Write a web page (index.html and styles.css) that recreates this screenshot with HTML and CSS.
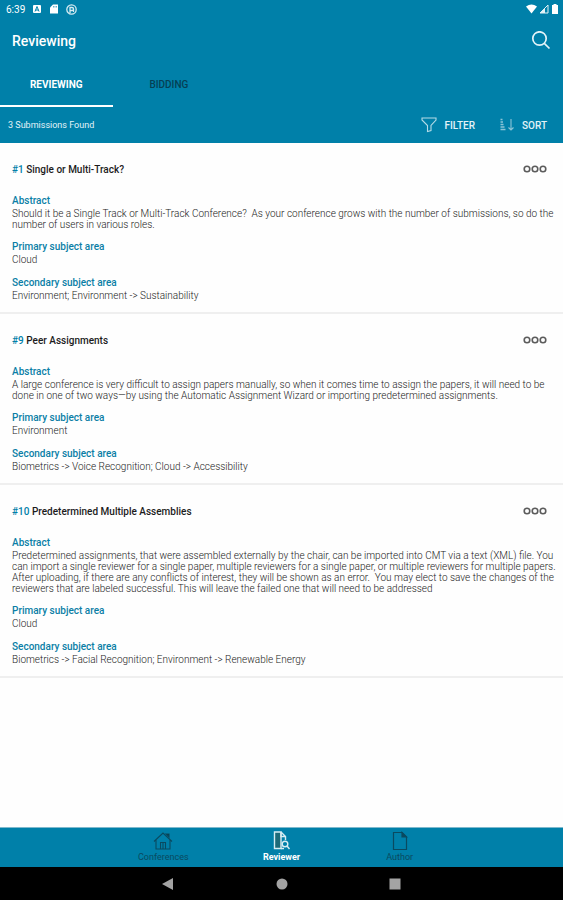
FILE: index.html
```html
<!DOCTYPE html>
<html lang="en">
<head>
    <meta charset="UTF-8">
    <meta name="viewport" content="width=device-width, initial-scale=1.0">
    <title>Reviewing</title>
    <link rel="stylesheet" href="styles.css">
</head>
<body>
    <header class="header">
        <div class="status-bar">
            <div class="status-left">
                <span>6:39</span>
                <svg width="10" height="10" viewBox="0 0 10 10"><rect x="1" y="1" width="8" height="8" rx="1" fill="#fff"/><path d="M3 7.5L5 2.5L7 7.5M3.8 6h2.4" stroke="#0080a9" fill="none"/></svg>
                <svg width="10" height="10" viewBox="0 0 10 10"><path d="M4 0.5H9V9.5H1V3.5Z" fill="#fff"/><path d="M4.5 2v1.5M6 2v1.5M7.5 2v1.5" stroke="#0080a9" stroke-width="0.6"/></svg>
                <svg width="11" height="11" viewBox="0 0 11 11" fill="none" stroke="#d5ebf2" stroke-width="1.3"><circle cx="5.5" cy="5.5" r="4.7"/><path d="M4 9V3.5H6A1.5 1.5 0 0 1 6 6.5H4M7.5 5v3"/></svg>
            </div>
            <div class="status-right">
                <svg width="11" height="10" viewBox="0 0 11 10"><path d="M0 2.5Q5.5 -1.5 11 2.5L5.5 9.5Z" fill="#fff"/></svg>
                <svg width="10" height="10" viewBox="0 0 10 10"><path d="M9 1V9H1Z" fill="none" stroke="#e3f2f6"/><path d="M6 4V9H1Z" fill="#e3f2f6"/></svg>
                <svg width="8" height="10" viewBox="0 0 8 10"><path d="M2.5 0H5.5V1H7V10H1V1H2.5Z" fill="#fff"/></svg>
            </div>
        </div>
        <div class="title-bar">
            <h1>Reviewing</h1>
            <button class="icon-btn" aria-label="Search">
                <svg width="20" height="20" viewBox="0 0 20 20" fill="none" stroke="#e3f3f8" stroke-width="1.7"><circle cx="8.5" cy="7.5" r="6.7"/><path d="M13.3 12.3L18.5 17.5"/></svg>
            </button>
        </div>
        <nav class="tabs">
            <a href="#reviewing" class="active">REVIEWING</a>
            <a href="#bidding">BIDDING</a>
        </nav>
        <div class="toolbar">
            <span class="count">3 Submissions Found</span>
            <div class="actions">
                <button>
                    <svg width="16" height="16" viewBox="0 0 16 16" fill="none" stroke="#b5dbe7" stroke-width="1.1"><path d="M1 1H15V3L10 8.5V13.5L6.5 14.5V8.5L1 3Z"/></svg>
                    FILTER
                </button>
                <button>
                    <svg width="16" height="16" viewBox="0 0 16 16" fill="none" stroke="#8bc4d7"><path d="M1.5 2.5h2M1.5 5h2.5M1.5 7.5h3M1.5 10h4M1.5 12.5h5" stroke-width="1.6"/><path d="M12 2v11M9.5 10.5L12 13L14.5 10.5" stroke-width="1.1"/></svg>
                    SORT
                </button>
            </div>
        </div>
    </header>

    <main class="list">
        <article class="card">
            <div class="card-head">
                <h2><span>#1</span> Single or Multi-Track?</h2>
                <button class="icon-btn" aria-label="More options">
                    <svg width="24" height="8" viewBox="0 0 24 8" fill="none" stroke="#5c5c5c" stroke-width="1.6"><circle cx="4" cy="4" r="2.8"/><circle cx="12" cy="4" r="2.8"/><circle cx="20" cy="4" r="2.8"/></svg>
                </button>
            </div>
            <h3>Abstract</h3>
            <p class="abstract">Should it be a Single Track or Multi-Track Conference?&nbsp; As your conference grows with the number of submissions, so do the number of users in various roles.</p>
            <h3>Primary subject area</h3>
            <p>Cloud</p>
            <h3>Secondary subject area</h3>
            <p>Environment; Environment -&gt; Sustainability</p>
        </article>

        <article class="card">
            <div class="card-head">
                <h2><span>#9</span> Peer Assignments</h2>
                <button class="icon-btn" aria-label="More options">
                    <svg width="24" height="8" viewBox="0 0 24 8" fill="none" stroke="#5c5c5c" stroke-width="1.6"><circle cx="4" cy="4" r="2.8"/><circle cx="12" cy="4" r="2.8"/><circle cx="20" cy="4" r="2.8"/></svg>
                </button>
            </div>
            <h3>Abstract</h3>
            <p class="abstract">A large conference is very difficult to assign papers manually, so when it comes time to assign the papers, it will need to be done in one of two ways—by using the Automatic Assignment Wizard or importing predetermined assignments.</p>
            <h3>Primary subject area</h3>
            <p>Environment</p>
            <h3>Secondary subject area</h3>
            <p>Biometrics -&gt; Voice Recognition; Cloud -&gt; Accessibility</p>
        </article>

        <article class="card">
            <div class="card-head">
                <h2><span>#10</span> Predetermined Multiple Assemblies</h2>
                <button class="icon-btn" aria-label="More options">
                    <svg width="24" height="8" viewBox="0 0 24 8" fill="none" stroke="#5c5c5c" stroke-width="1.6"><circle cx="4" cy="4" r="2.8"/><circle cx="12" cy="4" r="2.8"/><circle cx="20" cy="4" r="2.8"/></svg>
                </button>
            </div>
            <h3>Abstract</h3>
            <p class="abstract">Predetermined assignments, that were assembled externally by the chair, can be imported into CMT via a text (XML) file. You can import a single reviewer for a single paper, multiple reviewers for a single paper, or multiple reviewers for multiple papers. After uploading, if there are any conflicts of interest, they will be shown as an error.&nbsp; You may elect to save the changes of the reviewers that are labeled successful. This will leave the failed one that will need to be addressed</p>
            <h3>Primary subject area</h3>
            <p>Cloud</p>
            <h3>Secondary subject area</h3>
            <p>Biometrics -&gt; Facial Recognition; Environment -&gt; Renewable Energy</p>
        </article>
    </main>

    <nav class="bottom-nav">
        <a href="#conferences">
            <svg width="20" height="20" viewBox="0 0 20 20" fill="none" stroke="#0a4a60" stroke-width="1.1"><path d="M1 10.5L10 2L19 10.5M3 9V18H17V9M7.5 18V11.5H12.5V18M10 11.5V18"/><path d="M13 3h3v3Z" fill="#06242f"/></svg>
            Conferences
        </a>
        <a href="#reviewer" class="active">
            <svg width="20" height="20" viewBox="0 0 20 20" fill="none" stroke="#d7edf3" stroke-width="1.4"><path d="M2.5 1H9V17.5H2.5Z" fill="#1d6b79"/><path d="M9 1L13.5 5.5V9M9 1V5.5H13.5M9 17.5H12"/><circle cx="13" cy="13" r="2.8" fill="#0080a9"/><path d="M15 15L17.5 18"/></svg>
            Reviewer
        </a>
        <a href="#author">
            <svg width="20" height="20" viewBox="0 0 20 20" fill="none" stroke="#0a4a60" stroke-width="1.2"><path d="M3.5 1.5H12L16.5 6V18.5H3.5Z"/><path d="M12 1.5V6H16.5Z" fill="#0a4a60"/></svg>
            Author
        </a>
    </nav>

    <div class="system-nav">
        <button class="icon-btn" aria-label="Back"><svg width="12" height="12" viewBox="0 0 12 12"><path d="M0 6L11 0V12Z" fill="#a3a3a3"/></svg></button>
        <button class="icon-btn" aria-label="Home"><svg width="12" height="12" viewBox="0 0 12 12"><circle cx="6" cy="6" r="5.5" fill="#a3a3a3"/></svg></button>
        <button class="icon-btn" aria-label="Recent apps"><svg width="12" height="12" viewBox="0 0 12 12"><rect x="0.5" y="0.5" width="11" height="11" fill="#a3a3a3"/></svg></button>
    </div>
</body>
</html>
```
FILE: styles.css
```css
* {
    box-sizing: border-box;
}
body {
    font-family: Roboto, 'Liberation Sans', sans-serif;
    display: flex;
    flex-direction: column;
    min-height: 100vh;
    margin: 0;
    background: #fefefe;
    color: #222;
}
h1, h2, h3, p {
    margin: 0;
}
a {
    text-decoration: none;
}
button {
    font-family: inherit;
    background: none;
    border: none;
    padding: 0;
    color: inherit;
    cursor: pointer;
}
svg {
    display: block;
}
.icon-btn {
    display: flex;
}

/* Header */
.header {
    background: #0080a9;
    color: white;
}
.status-bar {
    display: flex;
    justify-content: space-between;
    align-items: center;
    height: 18px;
    padding: 0 4px 0 6px;
    font-size: 10px;
}
.status-left {
    display: flex;
    align-items: center;
    gap: 7px;
}
.status-right {
    display: flex;
    align-items: center;
    gap: 2px;
}
.title-bar {
    display: flex;
    justify-content: space-between;
    align-items: center;
    height: 46px;
    padding: 0 12px;
}
.title-bar h1 {
    font-size: 14px;
    font-weight: 500;
}
.tabs {
    display: flex;
    height: 43px;
}
.tabs a {
    display: flex;
    align-items: center;
    justify-content: center;
    width: 20%;
    border-bottom: 2px solid transparent;
    font-size: 10px;
    font-weight: 500;
    color: #063f54;
}
.tabs a.active {
    color: white;
    font-weight: bold;
    border-bottom-color: white;
}
.toolbar {
    display: flex;
    justify-content: space-between;
    align-items: center;
    height: 36px;
    padding: 0 16px 0 8px;
}
.count {
    font-size: 9px;
    color: #e3f3f8;
}
.actions {
    display: flex;
    gap: 24px;
}
.actions button {
    display: flex;
    align-items: center;
    gap: 7px;
    font-size: 10px;
    font-weight: 500;
    color: #e3f3f8;
}

/* Submissions */
.list {
    flex: 1;
}
.card {
    padding: 16px 4px 10px 12px;
    border-bottom: 2px solid #efefef;
}
.card-head {
    display: flex;
    justify-content: space-between;
    align-items: center;
    height: 20px;
    margin-bottom: 15px;
    padding-right: 12px;
}
.card h2 {
    font-size: 10px;
    font-weight: 500;
    color: #1c1c1c;
}
.card h2 span {
    color: #0080a9;
}
.card h3 {
    font-size: 10px;
    line-height: 14px;
    font-weight: 500;
    color: #0b7ea6;
}
.card p {
    font-size: 10px;
    font-weight: 300;
    line-height: 12px;
}
.card .abstract {
    line-height: 11px;
}
.card p + h3 {
    margin-top: 10px;
}

/* Bottom navigation */
.bottom-nav {
    display: flex;
    justify-content: center;
    height: 40px;
    background: #0080a9;
    border-top: 1px solid #7fb9cd;
}
.bottom-nav a {
    display: flex;
    flex-direction: column;
    align-items: center;
    width: 21%;
    padding-top: 3px;
    font-size: 9px;
    line-height: 12px;
    color: #0a4a60;
}
.bottom-nav a.active {
    color: white;
    font-weight: bold;
}
.system-nav {
    display: flex;
    justify-content: center;
    align-items: center;
    gap: 18%;
    height: 33px;
    background: black;
}
```
